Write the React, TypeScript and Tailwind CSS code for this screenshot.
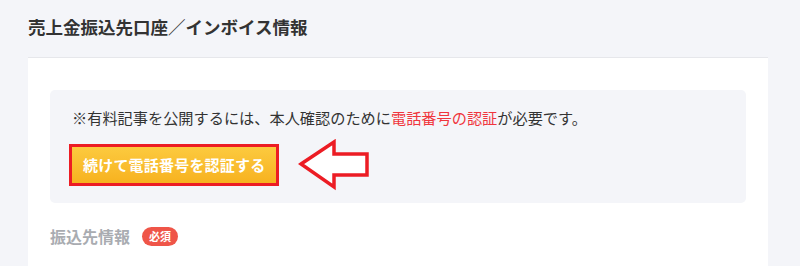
const font = "font-['Noto_Sans_CJK_JP','Noto_Sans',sans-serif]";

const LeftArrow = () => (
  <svg width="72" height="52" viewBox="0 0 72 52" className="shrink-0">
    <polygon
      points="3,25 36,3 36,15 69,15 69,36 36,36 36,48"
      fill="#ffffff"
      stroke="#ec1c24"
      strokeWidth="3.5"
      strokeLinejoin="miter"
    />
  </svg>
);

export default function App() {
  return (
    <div className={`w-[800px] h-[266px] overflow-hidden bg-[#f4f5f9] pl-[28px] pr-[32px] pt-[15px] ${font}`}>
      <h2 className="text-[17.5px] leading-[24px] font-bold text-[#333333] mb-[18px]">
        売上金振込先口座／インボイス情報
      </h2>

      <div className="bg-white border-t border-[#e6e7eb] px-[22px] pt-[32px] h-[220px]">
        <div className="bg-[#f4f5f9] rounded-[5px] pl-[22px] pr-4 pt-[16px] pb-[12px]">
          <p className="text-[15.2px] leading-[22px] text-[#333333]">
            ※有料記事を公開するには、本人確認のために
            <span className="text-[#f0353d]">電話番号の認証</span>
            が必要です。
          </p>
          <div className="flex items-center gap-[19px] mt-[11px] -ml-[3px]">
            <div className="border-[3px] border-[#ec1c24]">
              <button className="h-[36px] px-[11px] bg-gradient-to-b from-[#fcca3e] to-[#f7b21e] text-white text-[15px] font-bold leading-[36px] tracking-[0.2px]">
                続けて電話番号を認証する
              </button>
            </div>
            <LeftArrow />
          </div>
        </div>

        <div className="flex items-center gap-[12px] mt-[21px]">
          <span className="text-[16px] leading-[24px] font-bold text-[#a9acb1]">振込先情報</span>
          <span className="h-[19px] px-[7px] rounded-full bg-[#ef5548] text-white text-[11px] font-bold leading-[19px]">
            必須
          </span>
        </div>
      </div>
    </div>
  );
}
